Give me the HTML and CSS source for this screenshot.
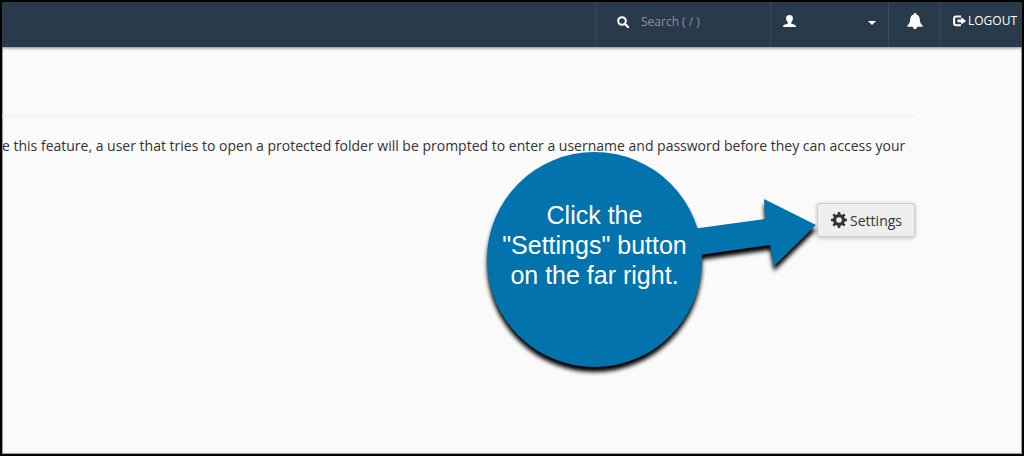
FILE: index.html
```html
<!DOCTYPE html>
<html lang="en">
<head>
<meta charset="utf-8">
<title>Directory Privacy</title>
<link rel="stylesheet" href="styles.css">
</head>
<body>
<div class="page">
  <header class="topbar">
    <label class="search">
      <svg class="icon-search" viewBox="0 0 12 12" width="12" height="12" aria-hidden="true"><circle cx="5" cy="5" r="3.8" fill="none" stroke="currentColor" stroke-width="2"/><path d="M8 8l3 3" stroke="currentColor" stroke-width="2.4" stroke-linecap="round"/></svg>
      <input class="search-input" type="text" placeholder="Search ( / )" aria-label="Search">
    </label>
    <button class="account" type="button" aria-label="Account">
      <svg viewBox="0 0 13 12" width="13" height="12" aria-hidden="true"><path fill="currentColor" d="M6.500 0C8.500 0 9.900 1.200 9.900 3.200C9.900 4.900 9.300 6.300 8.200 7.300V8.500C9.200 9.200 12.900 9.700 12.900 11.200V12H.1V11.200C.1 9.700 3.800 9.200 4.800 8.500V7.300C3.700 6.300 3.100 4.900 3.100 3.200C3.100 1.200 4.500 0 6.500 0Z"/></svg>
      <svg class="caret" viewBox="0 0 8 4" width="8" height="4" aria-hidden="true"><path fill="currentColor" d="M0 0H8L4 4Z"/></svg>
    </button>
    <button class="alerts" type="button" aria-label="Notifications">
      <svg viewBox="0 0 16 16" width="16" height="16" aria-hidden="true"><path fill="currentColor" d="M8 0C8.900 0 9.300.6 9.200 1.400C11.400 2 12.500 3.500 12.700 5.500C12.900 8.100 13.100 9.800 14.200 10.900L15.600 12.400V13.700H.4V12.400L1.800 10.900C2.900 9.800 3.100 8.100 3.300 5.500C3.500 3.500 4.600 2 6.800 1.400C6.700.6 7.100 0 8 0ZM6 13.700H10C10 15.300 9.200 16 8 16S6 15.300 6 13.700Z"/></svg>
    </button>
    <a class="logout" href="#">
      <svg viewBox="0 0 13 12" width="13" height="12" aria-hidden="true"><path d="M8 1.500H3.200Q1.100 1.500 1.100 3.500V8.300Q1.100 10.300 3.200 10.300H8" fill="none" stroke="currentColor" stroke-width="2.100"/><path fill="currentColor" d="M4.500 4.500H8.300V2.200L13 5.900L8.300 9.600V7.300H4.500Z"/></svg>
      <span>LOGOUT</span>
    </a>
  </header>
  <main class="content">
    <p class="intro">e this feature, a user that tries to open a protected folder will be prompted to enter a username and password before they can access your</p>
    <div class="actions">
      <button class="settings" type="button">
        <svg viewBox="0 0 16 16" width="16" height="16" aria-hidden="true"><g fill="currentColor"><path fill-rule="evenodd" d="M8 2a6 6 0 1 0 0 12a6 6 0 0 0 0-12ZM8 5.200a2.800 2.800 0 1 1 0 5.600a2.800 2.800 0 0 1 0-5.600Z"/><path id="tooth" d="M6.500 3L6.800 0H9.200L9.500 3Z"/><use href="#tooth" transform="rotate(45 8 8)"/><use href="#tooth" transform="rotate(90 8 8)"/><use href="#tooth" transform="rotate(135 8 8)"/><use href="#tooth" transform="rotate(180 8 8)"/><use href="#tooth" transform="rotate(225 8 8)"/><use href="#tooth" transform="rotate(270 8 8)"/><use href="#tooth" transform="rotate(315 8 8)"/></g></svg>
        <span>Settings</span>
      </button>
      <aside class="callout">
        <svg class="callout-shape" viewBox="0 0 330 216" width="330" height="216" aria-hidden="true"><g fill="#0273ad"><circle cx="107.500" cy="107.500" r="107.500"/><path d="M205 77L278 67L277 47L329 73L287 114L283 93L205 104Z"/></g></svg>
        <p class="callout-text">Click the<br>"Settings" button<br>on the far right.</p>
      </aside>
    </div>
  </main>
</div>
</body>
</html>
```
FILE: styles.css
```css
* {
  box-sizing: border-box;
}

body {
  margin: 0;
  background: #fafafa;
  color: #333;
  font-family: "Open Sans", sans-serif;
  font-size: 14px;
}

.page {
  min-height: 100vh;
  border: 2px solid #000;
  box-shadow: inset 0 0 1px 1px #999;
}

.topbar {
  display: flex;
  justify-content: flex-end;
  height: 45px;
  background: #293a4a;
  color: #fff;
  box-shadow: 0 1px 3px rgba(0, 0, 0, 0.5);
}

.search,
.account,
.alerts,
.logout {
  display: flex;
  align-items: center;
  border: 0;
  border-left: 1px solid #384a5a;
  padding: 0 0 8px;
  background: none;
  color: inherit;
}

.search {
  width: 174px;
  padding: 0 20px 6px;
  gap: 12px;
}

.icon-search {
  flex: none;
}

.search-input {
  width: 100%;
  border: 0;
  padding: 0;
  outline: 0;
  background: transparent;
  color: #fff;
  font: 12px "Open Sans", sans-serif;
}

.search-input::placeholder {
  color: #8e9499;
  opacity: 1;
}

.account {
  width: 118px;
  justify-content: space-between;
  padding: 0 12px 8px;
}

.caret {
  margin-top: 4px;
}

.alerts {
  width: 51px;
  justify-content: center;
  padding-left: 2px;
}

.logout {
  width: 83px;
  padding-left: 13px;
  gap: 2px;
  font-size: 12px;
  text-decoration: none;
}

.content {
  margin: 69px 107px 0 0;
  border-top: 1px solid #eee;
}

.intro {
  margin: 19px 0 0;
  line-height: 20px;
  white-space: nowrap;
}

.actions {
  position: relative;
  display: flex;
  justify-content: flex-end;
  margin-top: 47px;
}

.settings {
  display: flex;
  align-items: center;
  gap: 3px;
  height: 34px;
  padding: 0 12px 0 13px;
  border: 1px solid #ccc;
  border-radius: 2px;
  background: #eee;
  box-shadow: 0 1px 4px rgba(0, 0, 0, 0.25);
  color: #333;
  font: inherit;
}

.callout {
  position: absolute;
  top: -51px;
  right: 98px;
  width: 330px;
}

.callout-shape {
  display: block;
  overflow: visible;
  filter: drop-shadow(0 5px 2px #000);
}

.callout-text {
  position: absolute;
  top: 48px;
  left: 0;
  width: 215px;
  margin: 0;
  color: #fff;
  font: 25px/30px "Liberation Sans", Arial, sans-serif;
  text-align: center;
}
```
